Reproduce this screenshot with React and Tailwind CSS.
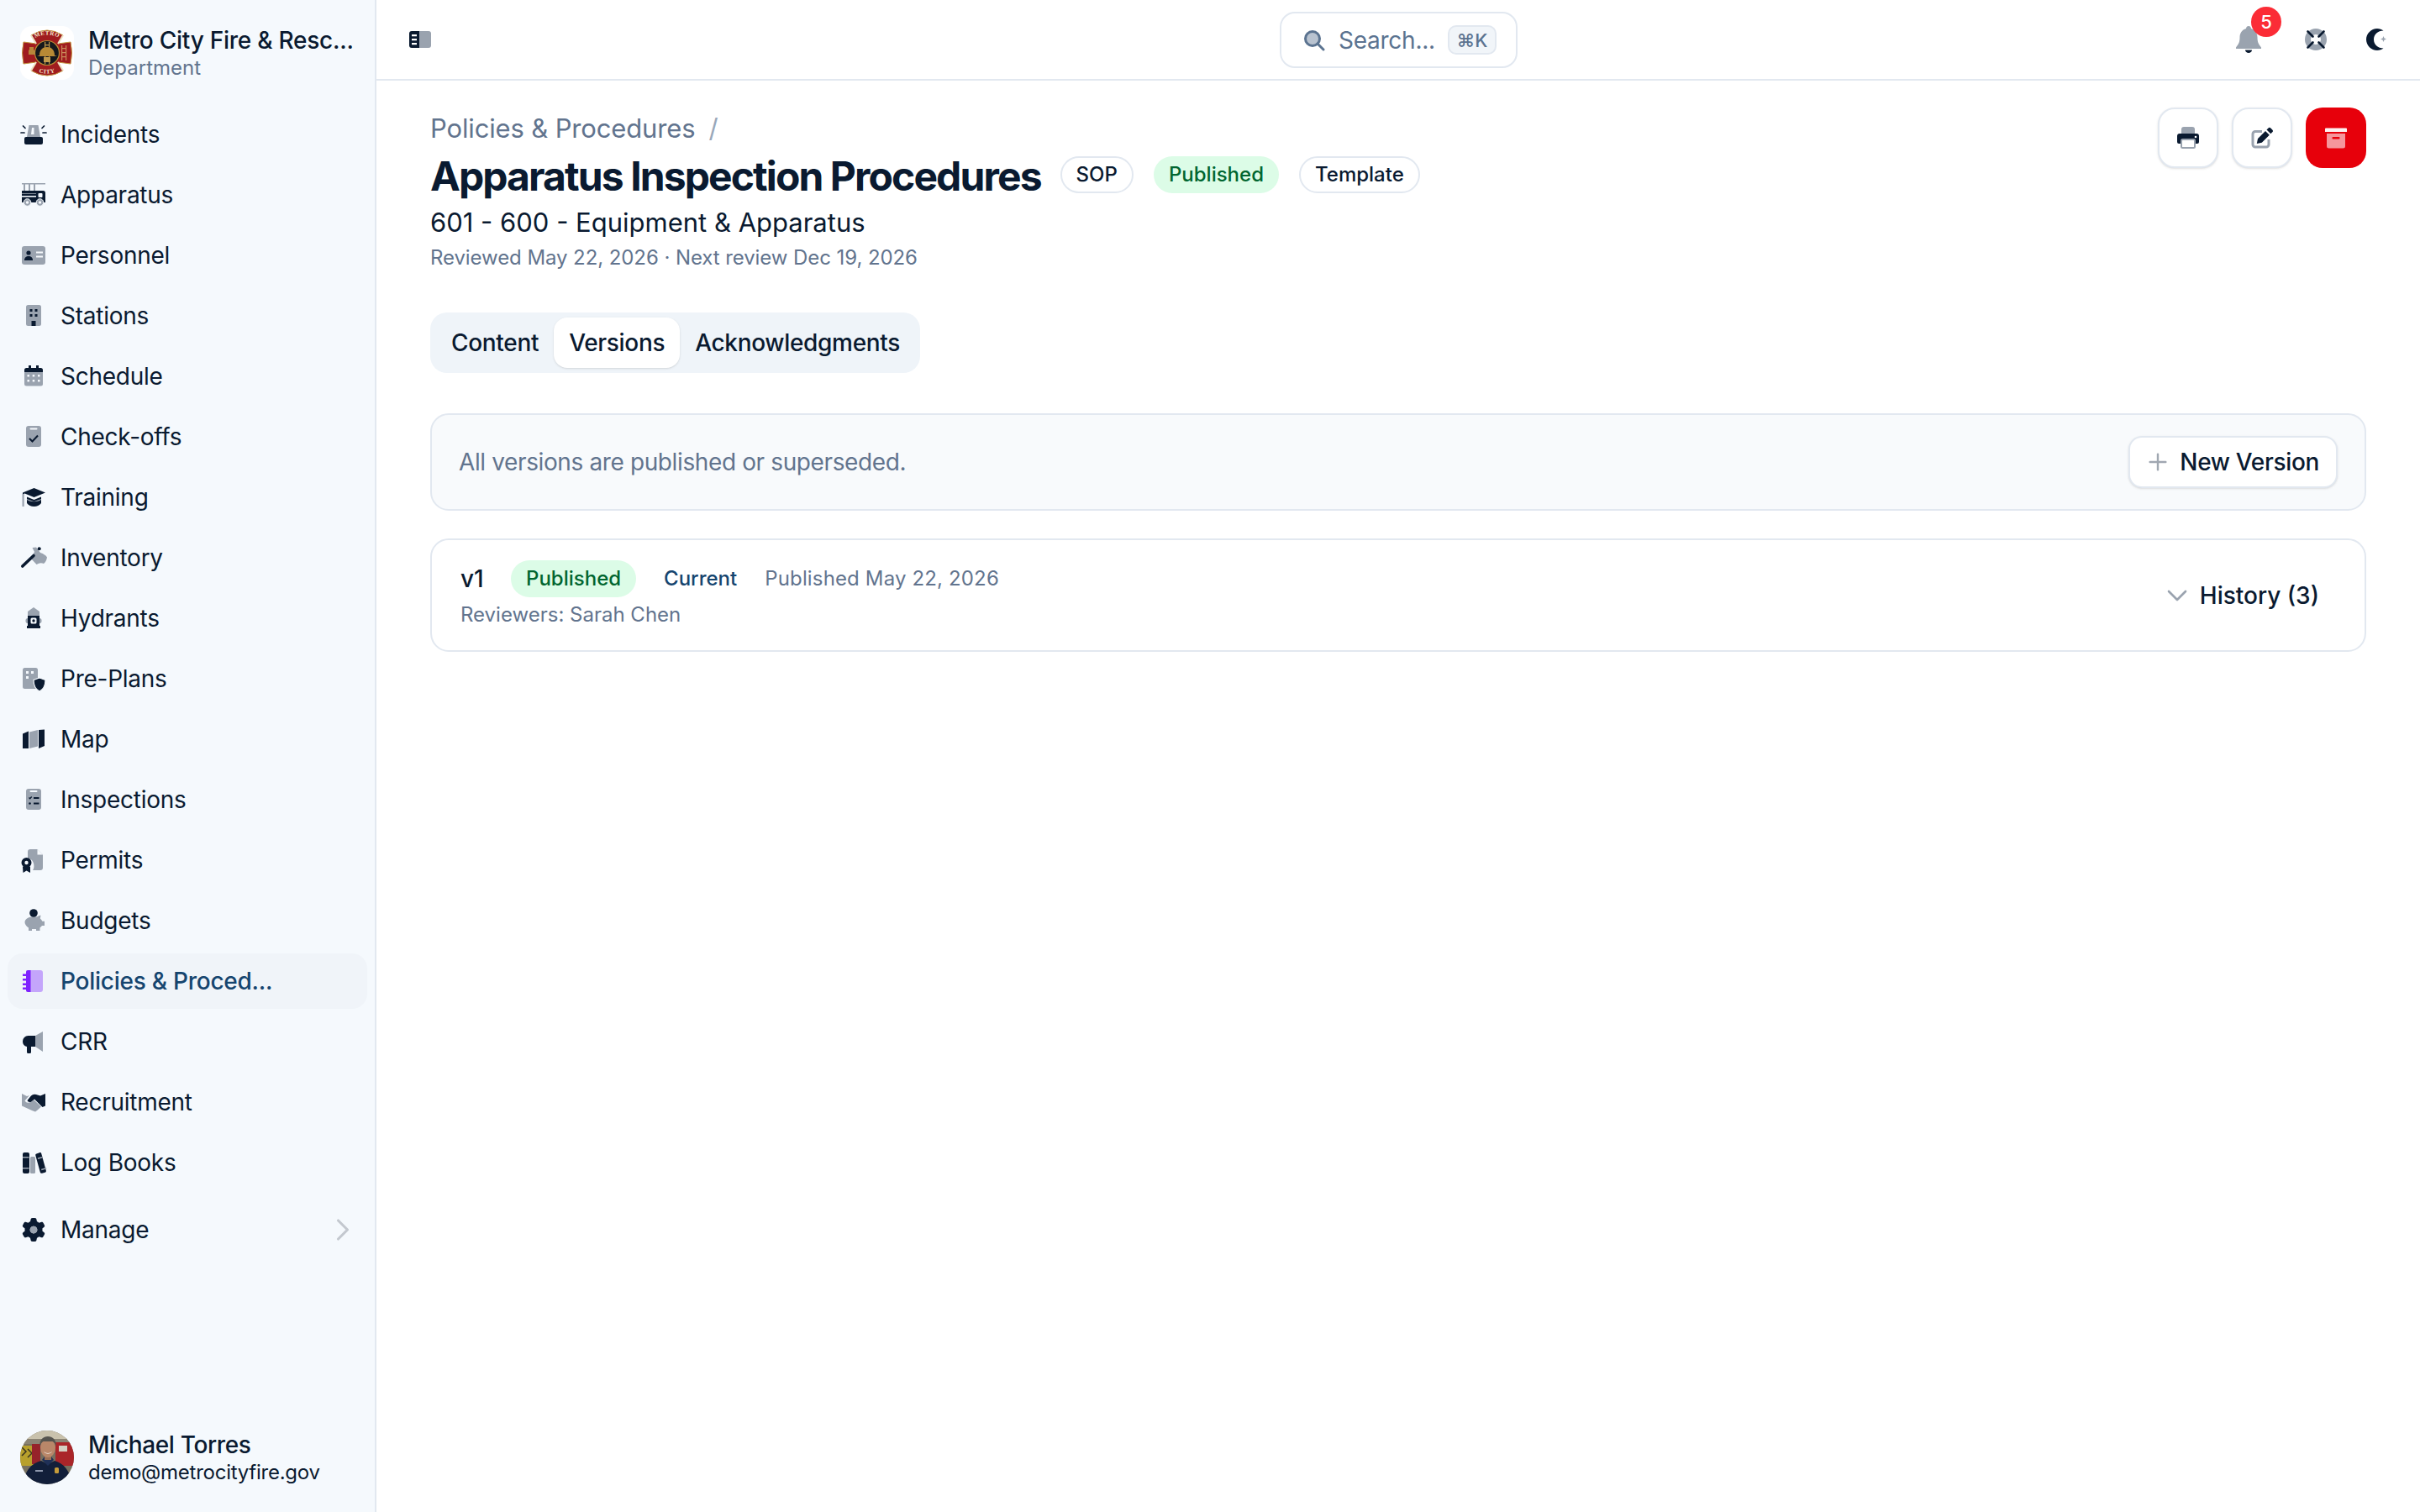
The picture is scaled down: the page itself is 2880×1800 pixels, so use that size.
import React from 'react';
import { FaGear } from 'react-icons/fa6';
import { ChevronDown, ChevronRight, Plus } from 'lucide-react';

const D = '#0a1a30';
const G = '#9aa3af';
const L = '#f5f9fd';

const Ico = ({ children }) => (
  <svg width="32" height="32" viewBox="0 0 32 32" className="shrink-0">
    {children}
  </svg>
);

const icons = {
  incidents: (
    <>
      <path d="M10.5 5h11l2.5 14H8z" fill={G} />
      <path d="M14 8h2.5v8H13z" fill={L} />
      <rect x="5" y="19" width="22" height="9" rx="2" fill={D} />
      <path d="M1 14h4M27 14h4M3.5 6L6 8.500M28.500 6L26 8.500" stroke={D} strokeWidth="1.700" strokeLinecap="round" />
    </>
  ),
  apparatus: (
    <>
      <path d="M2 2h28v1.600H2zM4 3.600h2V11H4zM10 3.600h2V11h-2zM16 3.600h2V11h-2z" fill={G} />
      <path d="M2 11h17v3H2zM2 17h8v4H2z" fill={D} />
      <path d="M2 14.500h17V11h8.500c1.500 0 2.500 1 2.500 2.500V25H2z" fill={D} />
      <rect x="21.500" y="14" width="5" height="5" rx="1" fill={L} />
      <rect x="2" y="17" width="17" height="1.600" fill={L} />
      <circle cx="8.500" cy="25" r="4.300" fill={G} stroke={L} strokeWidth="1" />
      <circle cx="8.500" cy="25" r="1.700" fill={L} />
      <circle cx="23.500" cy="25" r="4.300" fill={G} stroke={L} strokeWidth="1" />
      <circle cx="23.500" cy="25" r="1.700" fill={L} />
    </>
  ),
  personnel: (
    <>
      <rect x="2" y="5" width="28" height="22" rx="3" fill={G} />
      <circle cx="10" cy="13" r="2.600" fill={D} />
      <path d="M5 22c0-3.500 2-5 5-5s5 1.500 5 5z" fill={D} />
      <path d="M19 11.500h8v2h-8zM19 16.500h8v2h-8z" fill={L} />
    </>
  ),
  stations: (
    <>
      <rect x="7" y="3" width="18" height="25" rx="2.500" fill={G} />
      <path d="M11.500 8h3v3h-3zM17.500 8h3v3h-3zM11.500 14h3v3h-3zM17.500 14h3v3h-3zM13.500 22h5v6h-5z" fill={D} />
    </>
  ),
  schedule: (
    <>
      <path d="M5 11h22v14a2.500 2.500 0 0 1-2.500 2.500h-17A2.500 2.500 0 0 1 5 25z" fill={G} />
      <path d="M10 3h3v3h6V3h3v3h2.500A2.500 2.500 0 0 1 27 8.500V11H5V8.500A2.500 2.500 0 0 1 7.500 6H10z" fill={D} />
      <path d="M8.500 14H11v2.500H8.500zM14.700 14h2.500v2.500h-2.500zM21 14h2.500v2.500H21zM8.500 20H11v2.500H8.500zM14.700 20h2.500v2.500h-2.500zM21 20h2.500v2.500H21z" fill={L} />
    </>
  ),
  checkoffs: (
    <>
      <path d="M10 3h12a3 3 0 0 1 3 3v19a3 3 0 0 1-3 3H10a3 3 0 0 1-3-3V6a3 3 0 0 1 3-3z" fill={G} />
      <rect x="11.500" y="5.500" width="9" height="2" rx="1" fill={L} />
      <path d="M11 18l3.500 3.500L21 14.500" stroke={D} strokeWidth="2" fill="none" />
    </>
  ),
  training: (
    <>
      <path d="M2.500 12v15h2.200V11z" fill={G} />
      <path d="M16.500 5L30 10.500 16.500 16 5.500 11.500 3 12.200V10.500z" fill={D} />
      <path d="M8 15.500l8.500 3.500L25 15.500V23c-2 2.700-5 4-8.500 4S10 25.700 8 23z" fill={D} />
      <path d="M8 19c5 3 12 3 17 0v-1l-8.500 3L8 18z" fill={G} />
    </>
  ),
  inventory: (
    <>
      <path d="M14.500 4L19 3.500 24 10q6 2 8 5.500-1 5.500-4 7.500-4-2-8.500 1L13 17l4-8z" fill={G} />
      <path d="M2.800 26L16 13.500" stroke={D} strokeWidth="3.600" strokeLinecap="round" />
      <circle cx="22.700" cy="5.300" r="2" fill={D} />
    </>
  ),
  hydrants: (
    <>
      <path d="M16 3l7 5v5H9V8z" fill={G} />
      <rect x="6.500" y="16" width="19" height="6" rx="2.500" fill={G} />
      <path d="M9 13h14v12h1v3H8v-3h1z" fill={D} />
      <rect x="12.500" y="15.500" width="7" height="7" rx="1.500" fill={L} />
      <circle cx="16" cy="19" r="1.700" fill={D} />
    </>
  ),
  preplans: (
    <>
      <path d="M5.500 3h13A2.500 2.500 0 0 1 21 5.500V28H5.500A2.500 2.500 0 0 1 3 25.500v-20A2.500 2.500 0 0 1 5.500 3z" fill={G} />
      <path d="M7 7h3v3H7zM13 7h3v3h-3zM7 13h3v3H7z" fill={L} />
      <path d="M23 15l7 2.500c0 6.500-2 11-7 13.500-5-2.500-7-7-7-13.500z" fill={D} stroke={L} strokeWidth="1.200" />
    </>
  ),
  map: (
    <>
      <path d="M11 7.500L21 5v19.500L11 27z" fill={G} />
      <path d="M3 9.500L10 6.500V27H3zM22 5l7-.500V24l-7 3z" fill={D} />
    </>
  ),
  inspections: (
    <>
      <path d="M10 3h12a3 3 0 0 1 3 3v19a3 3 0 0 1-3 3H10a3 3 0 0 1-3-3V6a3 3 0 0 1 3-3z" fill={G} />
      <rect x="11.500" y="5" width="9" height="2" rx="1" fill={L} />
      <path d="M10.500 13.500l1.200 1.200 2-2.200" stroke={D} strokeWidth="1.300" fill="none" />
      <circle cx="11.500" cy="20.500" r="1.300" fill={D} />
      <path d="M16 13h6.500v2H16zM16 19.500h6.500v2H16z" fill={D} />
    </>
  ),
  permits: (
    <>
      <path d="M12 3h8.500L27 9.500V25a3 3 0 0 1-3 3h-9c1.500-2 2-6 .500-9.500C14 15 11 14 9 14V6a3 3 0 0 1 3-3z" fill={G} />
      <path d="M20.500 3v6.500H27z" fill={L} />
      <circle cx="7.500" cy="19" r="6" fill={D} />
      <circle cx="7.500" cy="19" r="2.200" fill={L} />
      <path d="M3 24h9v7l-4.500-2.500L3.500 31z" fill={D} />
    </>
  ),
  budgets: (
    <>
      <path d="M14 11.500h6c1.500-1.300 3-1.800 4.500-1.800l-.700 3.800c1.200 1 2 2 2.500 3.300h2.700V22h-3c-.700 1-1.500 1.800-2.500 2.500V28h-4.500v-2h-5v2H10v-3.500C7 22.500 5.500 20 5.500 18c0-3.500 4-6.500 8.500-6.500z" fill={G} />
      <circle cx="16" cy="7" r="4.800" fill={D} />
    </>
  ),
  policies: (
    <>
      <path d="M11 3h13a3 3 0 0 1 3 3v20a3 3 0 0 1-3 3H11z" fill="#c4a5fb" />
      <path d="M9 3h3.500v26H9a2 2 0 0 1-2-2V5a2 2 0 0 1 2-2z" fill="#7f22fe" />
      <path d="M3 7.500h6v2.400H3zM3 13h6v2.400H3zM3 18.500h6v2.400H3zM3 23.500h6v2.400H3z" fill="#7f22fe" />
    </>
  ),
  crr: (
    <>
      <path d="M18 9l9-5v24l-9-6z" fill={G} />
      <path d="M9.500 9H18v13h-5v6.500a1.500 1.500 0 0 1-1.500 1.500h-2A1.500 1.500 0 0 1 8 28.500V22a6.500 6.500 0 0 1-5-6.500A6.500 6.500 0 0 1 9.500 9z" fill={D} />
    </>
  ),
  recruitment: (
    <>
      <path d="M2 6l6 3 3-1-5.500 6.500Q8 18 12 16l4-3 9 8.500-5 4.500-2 1.500-4-1.500L2 20.500z" fill={G} />
      <path d="M30 6v14.500L26.500 22 17 12.500 12.500 16Q9 16.500 8.500 14L13 8.500Q15.500 6 19 7l5 1.500z" fill={D} />
    </>
  ),
  logbooks: (
    <>
      <path d="M5 4h4a2 2 0 0 1 2 2v21a2 2 0 0 1-2 2H5a2 2 0 0 1-2-2V6a2 2 0 0 1 2-2z" fill={D} />
      <path d="M3 9h7.500v1.500H3zM3 22h7.500v1.500H3z" fill={G} />
      <rect x="12" y="9" width="6" height="20" rx="1.500" fill={G} />
      <path d="M19.500 5.500L23 4.200c1-.300 2 .200 2.300 1.200l5.500 20c.300 1-.200 2-1.200 2.300l-3.500 1c-1 .300-2-.200-2.300-1.200l-5.500-20c-.300-.800.200-1.700 1.200-2z" fill={D} />
      <path d="M20.800 10.500l6-1.700.400 1.400-6 1.700zM25 23.800l6-1.700.400 1.400-6 1.700z" fill={G} />
    </>
  ),
  manage: (
    <>
      <FaGear x="2" y="2" width="28" height="28" color={D} />
      <circle cx="16" cy="16" r="4.300" fill={G} />
    </>
  ),
};

const navItems = [
  { label: 'Incidents', icon: 'incidents' },
  { label: 'Apparatus', icon: 'apparatus' },
  { label: 'Personnel', icon: 'personnel' },
  { label: 'Stations', icon: 'stations' },
  { label: 'Schedule', icon: 'schedule' },
  { label: 'Check-offs', icon: 'checkoffs' },
  { label: 'Training', icon: 'training' },
  { label: 'Inventory', icon: 'inventory' },
  { label: 'Hydrants', icon: 'hydrants' },
  { label: 'Pre-Plans', icon: 'preplans' },
  { label: 'Map', icon: 'map' },
  { label: 'Inspections', icon: 'inspections' },
  { label: 'Permits', icon: 'permits' },
  { label: 'Budgets', icon: 'budgets' },
  { label: 'Policies & Proced...', icon: 'policies', active: true },
  { label: 'CRR', icon: 'crr' },
  { label: 'Recruitment', icon: 'recruitment' },
  { label: 'Log Books', icon: 'logbooks' },
];

const Logo = () => (
  <div className="size-[64px] shrink-0 rounded-[14px] bg-white flex items-center justify-center">
    <svg width="60" height="60" viewBox="0 0 60 60">
      <defs>
        <path id="logo-top" d="M12 14Q30 3 48 14" />
        <path id="logo-bottom" d="M12 50Q30 59 48 50" />
      </defs>
      <path
        d="M11 9Q30-3 49 9L43 19 58 17Q61 30 58 43L43 41 49 51Q30 63 11 51L17 41 2 43Q-1 30 2 17L17 19z"
        fill="#a01c1f"
        stroke="#c2953f"
        strokeWidth="1"
      />
      <path d="M17 19L11 9M43 19L49 9M17 41L11 51M43 41L49 51" stroke="#efe2c4" strokeWidth="2" />
      <text fontSize="7" fontWeight="700" fill="#f5ead2" letterSpacing=".6" fontFamily="Liberation Serif, serif">
        <textPath href="#logo-top" startOffset="50%" textAnchor="middle">METRO</textPath>
      </text>
      <text fontSize="7" fontWeight="700" fill="#f5ead2" letterSpacing=".6" fontFamily="Liberation Serif, serif">
        <textPath href="#logo-bottom" startOffset="50%" textAnchor="middle">CITY</textPath>
      </text>
      <circle cx="30" cy="30" r="14.500" fill="#15181c" stroke="#b88a35" strokeWidth="1.200" />
      <path d="M27 17h1.200v26H27zM32 17h1.200v26H32zM27 20h6v1.200h-6zM27 24h6v1.200h-6z" fill="#c09a4c" />
      <path d="M21 33c0-7 4-10 9-10s9 3 9 10l3 1H18z" fill="#b88a35" />
      <path d="M26 35h8v6h-8z" fill="#c09a4c" />
      <path d="M9 23h5v3l1 1v5H8v-5l1-1z" fill="#b9873a" />
      <path d="M47 21h1.200v18H47zM52 21h1.200v18H52zM47 24h6v1.200h-6zM47 29h6v1.200h-6zM47 34h6v1.200h-6z" fill="#c98a5a" />
    </svg>
  </div>
);

const Avatar = () => (
  <svg width="64" height="64" viewBox="0 0 64 64" className="shrink-0 rounded-full">
    <rect width="64" height="64" fill="#77705f" />
    <rect width="64" height="10" fill="#c9c2ad" />
    <rect y="10" width="64" height="6" fill="#8b8474" />
    <rect y="18" width="16" height="24" fill="#b8a02c" />
    <path d="M2 20l5 5-5 5M9 22l5 5-5 5" stroke="#3b3520" strokeWidth="1.500" fill="none" />
    <rect x="14" y="16" width="10" height="24" fill="#96232a" />
    <rect x="42" y="14" width="22" height="28" fill="#aa2529" />
    <rect x="46" y="18" width="10" height="7" fill="#d5cfc2" />
    <path d="M4 64c1-16 9-25 21-28l8 4 8-4c11 3 19 12 20 28z" fill="#121f3a" />
    <path d="M26 35l7 7 7-7-3-4h-8z" fill="#1f3057" />
    <rect x="29" y="27" width="8" height="8" fill="#9b6f55" />
    <ellipse cx="33" cy="20" rx="9" ry="12" fill="#b98769" />
    <path d="M23.500 19c-1-8 4-12 9.500-12s10.500 4 9.500 12c-1-3-2-5-4-6h-11c-2 1-3 3-4 6z" fill="#55544f" />
    <path d="M28 25c3 2.500 7 2.500 10 0-2 3.500-8 3.500-10 0z" fill="#f3ece4" />
    <rect x="41" y="44" width="5" height="7" rx="1.500" fill="#c69c3a" />
    <rect x="18" y="47" width="9" height="2" fill="#8d97ad" />
  </svg>
);

const Badge = ({ children, green }) => (
  <span
    className={`h-[44px] flex items-center rounded-full text-[24px] font-medium ${
      green ? 'px-[18px] bg-[#dcfce7] text-[#016630]' : 'px-[17px] border-2 border-[#e2e8f0] text-[#0a1a30]'
    }`}
  >
    {children}
  </span>
);

const ActionBtn = ({ children }) => (
  <button className="size-[72px] flex items-center justify-center rounded-[20px] border-2 border-[#e2e8f0] bg-white shadow-sm">
    {children}
  </button>
);

export default function App() {
  return (
    <div className="flex h-screen w-full bg-white text-[#0a1a30] font-['Inter',sans-serif] overflow-hidden">
      <aside className="w-[448px] shrink-0 flex flex-col bg-[#f5f9fd] border-r-2 border-[#e2e8f0]">
        <div className="flex items-center gap-[17px] pl-[24px] pt-[30px]">
          <Logo />
          <div className="min-w-0">
            <div className="text-[28px] leading-[36px] font-medium tracking-[-0.25px] whitespace-nowrap">Metro City Fire &amp; Resc...</div>
            <div className="text-[24px] leading-[30px] text-[#62748e]">Department</div>
          </div>
        </div>
        <nav className="mt-[28px] px-[9px] flex flex-col">
          {navItems.map((item) => (
            <div key={item.label} className="h-[72px] flex items-center">
              <div
                className={`h-[66px] w-full flex items-center gap-[16px] pl-[15px] rounded-[18px] text-[28px] tracking-[-0.25px] ${
                  item.active ? 'bg-[#f0f4f9] text-[#16456f] font-medium' : ''
                }`}
              >
                <Ico>{icons[item.icon]}</Ico>
                <span className="whitespace-nowrap">{item.label}</span>
              </div>
            </div>
          ))}
          <div className="mt-[8px] h-[72px] flex items-center gap-[16px] pl-[15px] text-[28px] tracking-[-0.25px]">
            <Ico>{icons.manage}</Ico>
            <span>Manage</span>
            <ChevronRight size={44} strokeWidth={1.7} className="ml-auto mr-[7px] text-[#c3c8cf]" />
          </div>
        </nav>
        <div className="mt-auto flex items-center gap-[17px] pl-[24px] pb-[32px]">
          <Avatar />
          <div>
            <div className="text-[28px] leading-[36px] font-medium tracking-[-0.35px]">Michael Torres</div>
            <div className="text-[24px] leading-[30px] tracking-[-0.25px]">demo@metrocityfire.gov</div>
          </div>
        </div>
      </aside>

      <div className="flex-1 min-w-0 flex flex-col">
        <header className="h-[96px] shrink-0 relative flex items-center justify-between border-b-2 border-[#e2e8f0] pl-[39px] pr-[38px]">
          <svg width="26" height="20" viewBox="0 0 26 20">
            <path d="M3 0h9v20H3a3 3 0 0 1-3-3V3a3 3 0 0 1 3-3z" fill={D} />
            <path d="M12 0h11a3 3 0 0 1 3 3v14a3 3 0 0 1-3 3H12z" fill={G} />
            <path d="M3 4h6v2.200H3zM3 9h6v2.200H3zM3 14h6v2.200H3z" fill="#fff" />
          </svg>
          <div className="absolute left-[1075px] top-[14px] h-[67px] w-[283px] flex items-center rounded-[18px] border-2 border-[#e2e8f0] pl-[26px] text-[#5b7390]">
            <svg width="26" height="26" viewBox="0 0 26 26" className="shrink-0">
              <circle cx="11" cy="11" r="8.500" fill="#b9c3d0" stroke="#5b7390" strokeWidth="3" />
              <path d="M17 17l7 7" stroke="#5b7390" strokeWidth="3" strokeLinecap="round" />
            </svg>
            <span className="ml-[16px] text-[28px] leading-none tracking-[-0.25px]">Search...</span>
            <span className="ml-[15px] h-[35px] w-[58px] flex items-center justify-center rounded-[10px] border-2 border-[#e2e8f0] bg-[#f1f5f9] text-[22px] leading-none font-medium">⌘K</span>
          </div>
          <div className="flex items-center">
            <div className="relative w-[32px] h-[32px] mr-[50px]">
              <svg width="30" height="32" viewBox="0 0 30 32">
                <path d="M15 0c2 0 3 1.500 3 3 5 1.500 7.500 5.500 7.500 10.500 0 6 1.500 8 4.500 12v1.500H0v-1.500c3-4 4.500-6 4.500-12C4.500 8.500 7 4.500 12 3c0-1.500 1-3 3-3z" fill={G} />
                <path d="M11 28.500h8c0 2-2 3.500-4 3.500s-4-1.500-4-3.500z" fill={D} />
              </svg>
              <span className="absolute left-[18px] top-[-23px] size-[36px] rounded-full bg-[#fb2c36] text-white flex items-center justify-center text-[22px] font-medium">5</span>
            </div>
            <svg width="26" height="26" viewBox="0 0 26 26" className="mr-[47px]">
              <circle cx="13" cy="13" r="9.500" fill="none" stroke={G} strokeWidth="7" />
              <path d="M3.500 3.500l6 6M22.500 3.500l-6 6M3.500 22.500l6-6M22.500 22.500l-6-6" stroke={D} strokeWidth="2.600" strokeLinecap="round" />
            </svg>
            <svg width="26" height="26" viewBox="0 0 26 26">
              <path d="M13 0C6 0 0 6 0 13s6 13 13 13c3 0 5.500-1 7.500-2.500C14 23.500 9 19 9 13S14 2.500 20.500 2.500C18.500 1 16 0 13 0z" fill={D} />
              <path d="M20.500 9l1 2.500 2.500 1-2.500 1-1 2.500-1-2.500-2.500-1 2.500-1z" fill={G} />
            </svg>
          </div>
        </header>

        <main className="px-[64px] pt-[34px]">
          <div className="flex justify-between">
            <div>
              <div className="flex items-center gap-[16px] h-[46px] text-[31px] tracking-[-0.15px] text-[#62748e]">
                <span>Policies &amp; Procedures</span>
                <span className="text-[#99a8ba]">/</span>
              </div>
              <div className="mt-[4px] flex items-center gap-[23px]">
                <h1 className="text-[48px] leading-[60px] font-bold tracking-[-1.9px]">Apparatus Inspection Procedures</h1>
                <div className="flex items-center gap-[24px] mb-[4px]">
                  <Badge>SOP</Badge>
                  <Badge green>Published</Badge>
                  <Badge>Template</Badge>
                </div>
              </div>
              <div className="mt-[4px] text-[31px] leading-[42px]">601 - 600 - Equipment &amp; Apparatus</div>
              <div className="mt-[3px] text-[24px] leading-[36px] tracking-[-0.08px] text-[#62748e]">Reviewed May 22, 2026 · Next review Dec 19, 2026</div>
            </div>
            <div className="flex gap-[16px] h-[72px] -mt-[2px]">
              <ActionBtn>
                <svg width="26" height="26" viewBox="0 0 26 26">
                  <path d="M5 10V3a3 3 0 0 1 3-3h10a3 3 0 0 1 3 3v7z" fill={G} />
                  <path d="M3 8h20a3 3 0 0 1 3 3v7a2 2 0 0 1-2 2H2a2 2 0 0 1-2-2v-7a3 3 0 0 1 3-3z" fill={D} />
                  <rect x="5" y="15" width="16" height="10" rx="1.500" fill="#fff" stroke={G} strokeWidth="2" />
                  <circle cx="22" cy="12" r="1.300" fill="#fff" />
                </svg>
              </ActionBtn>
              <ActionBtn>
                <svg width="26" height="26" viewBox="0 0 26 26">
                  <path d="M5 4h8v3H5a1.500 1.500 0 0 0-1.500 1.500V21A1.500 1.500 0 0 0 5 22.500h13a1.500 1.500 0 0 0 1.500-1.500v-6h3v6a4.500 4.500 0 0 1-4.500 4.500H5A4.500 4.500 0 0 1 .5 21V8.500A4.500 4.500 0 0 1 5 4z" fill={G} />
                  <path d="M20.500 1.500a2 2 0 0 1 2.800 0l2 2a2 2 0 0 1 0 2.800l-2 2-4.800-4.800zM17 5l4.800 4.800-9 9-6 1.200 1.200-6z" fill={D} />
                </svg>
              </ActionBtn>
              <button className="size-[72px] flex items-center justify-center rounded-[20px] bg-[#e7000b]">
                <svg width="26" height="26" viewBox="0 0 26 26">
                  <path d="M2 8h22v15a2.500 2.500 0 0 1-2.500 2.500h-17A2.500 2.500 0 0 1 2 23z" fill="#f5969c" />
                  <path d="M1 1.500h24a1 1 0 0 1 1 1V6H0V2.500a1 1 0 0 1 1-1z" fill="#fff" opacity=".95" />
                  <rect x="8.500" y="12" width="9" height="2.400" rx="1" fill="#e7000b" />
                </svg>
              </button>
            </div>
          </div>

          <div className="mt-[47px] inline-flex h-[72px] items-center rounded-[20px] bg-[#eff4f9] px-[6px] text-[28px] font-medium tracking-[-0.32px]">
            <span className="pl-[19px] pr-[18px]">Content</span>
            <span className="h-[60px] flex items-center rounded-[16px] bg-white px-[18px] shadow-sm">Versions</span>
            <span className="pl-[18px] pr-[18px]">Acknowledgments</span>
          </div>

          <section className="mt-[48px] h-[116px] flex items-center justify-between rounded-[22px] border-2 border-[#e2e8f0] bg-[#f8fafc] pl-[32px] pr-[32px]">
            <span className="text-[28px] tracking-[-0.38px] text-[#62748e]">All versions are published or superseded.</span>
            <button className="h-[62px] flex items-center gap-[10px] rounded-[16px] border-2 border-[#e2e8f0] bg-white pl-[17px] pr-[20px] text-[28px] font-medium tracking-[-0.33px] shadow-sm">
              <Plus size={32} strokeWidth={1.8} className="text-[#a0a7b1]" />
              New Version
            </button>
          </section>

          <section className="mt-[33px] h-[135px] flex items-center justify-between rounded-[22px] border-2 border-[#e2e8f0] bg-white pl-[34px] pr-[54px]">
            <div>
              <div className="flex items-center h-[44px]">
                <span className="text-[28px] font-medium w-[60px]">v1</span>
                <Badge green>Published</Badge>
                <span className="ml-[33px] text-[24px] font-medium text-[#16456f]">Current</span>
                <span className="ml-[33px] text-[24px] tracking-[0.15px] text-[#62748e]">Published May 22, 2026</span>
              </div>
              <div className="mt-[3px] text-[24px] leading-[36px] text-[#62748e]">Reviewers: Sarah Chen</div>
            </div>
            <div className="flex items-center gap-[7px] text-[28px] font-medium">
              <ChevronDown size={40} strokeWidth={1.6} className="text-[#9aa3af]" />
              History (3)
            </div>
          </section>
        </main>
      </div>
    </div>
  );
}
